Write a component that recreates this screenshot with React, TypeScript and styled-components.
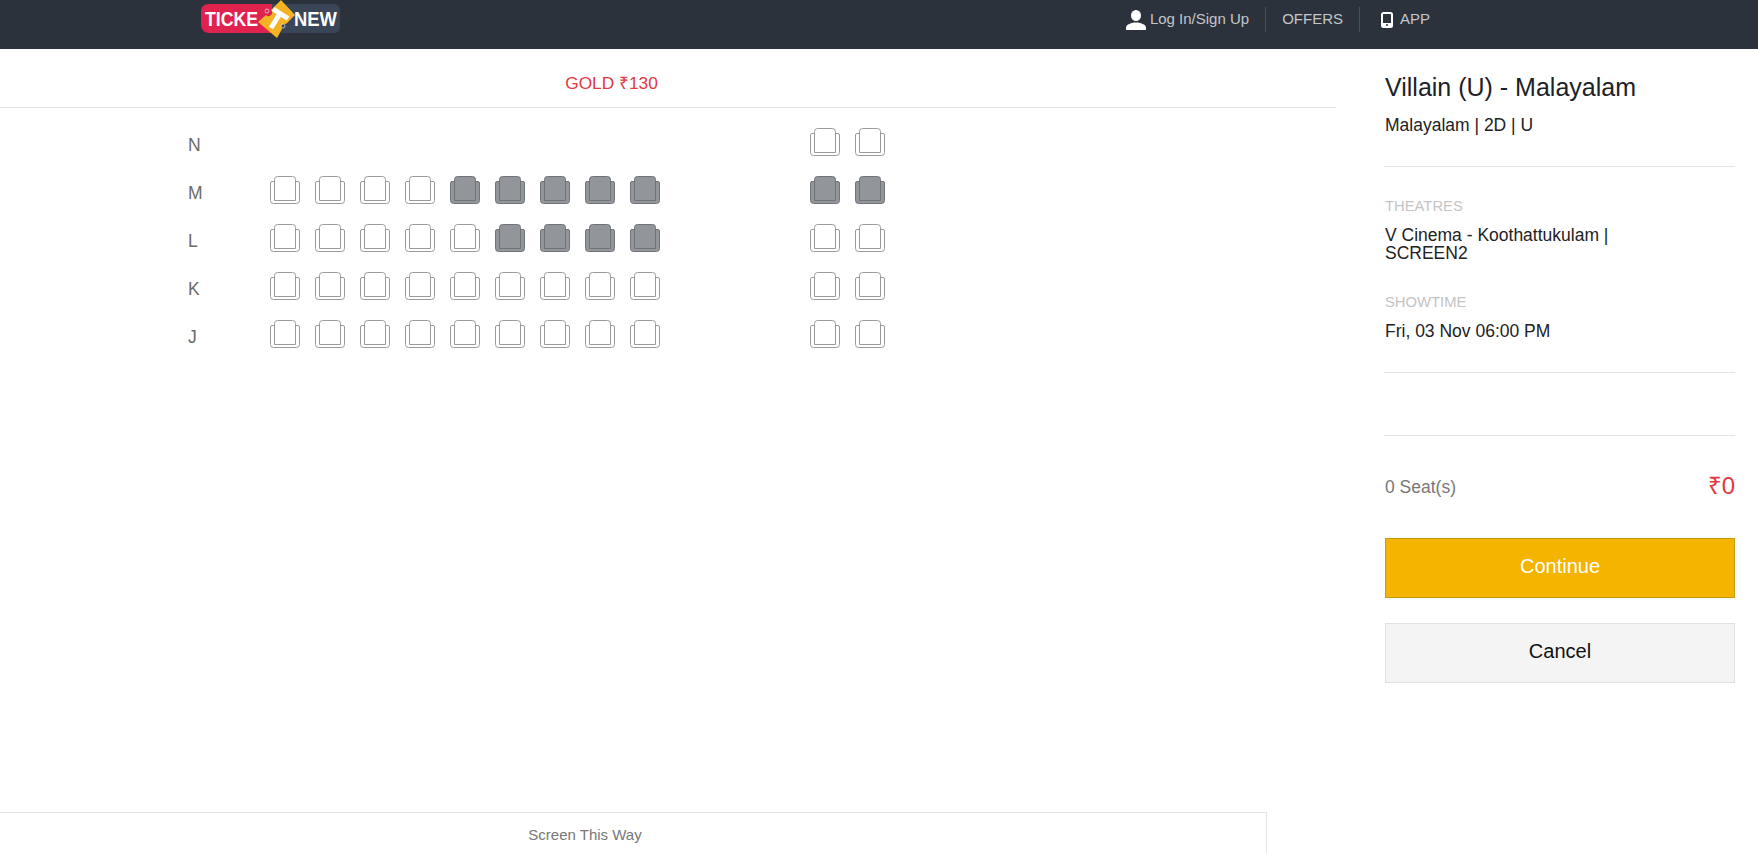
import React from "react";
import styled, { createGlobalStyle } from "styled-components";

const GlobalStyle = createGlobalStyle`
  html, body {
    margin: 0;
    padding: 0;
    height: 100%;
    background: #ffffff;
    overflow: hidden;
    font-family: "Liberation Sans", Arial, sans-serif;
  }
`;

const Page = styled.div`
  display: flex;
  flex-direction: column;
  height: 100vh;
`;

const Header = styled.header`
  display: flex;
  justify-content: space-between;
  flex: 0 0 49px;
  height: 49px;
  background: #2b323c;
  padding: 0 312px 0 200px;
`;

const LogoBox = styled.svg`
  display: block;
  width: 142px;
  height: 40px;
`;

const Nav = styled.nav`
  display: flex;
  align-items: flex-start;
  padding-top: 7px;
`;

const NavItem = styled.a<{ $divided?: boolean; $gap?: number; $inset?: number }>`
  display: flex;
  align-items: center;
  gap: ${(p) => p.$gap ?? 4}px;
  height: 25px;
  padding: 0 16px 0 ${(p) => p.$inset ?? 16}px;
  font-size: 15px;
  color: #c3c6ca;
  border-left: ${(p) => (p.$divided ? "1px solid #4a515b" : "none")};
`;

const NavLabel = styled.span`
  margin-top: -2px;
`;

const Main = styled.main`
  display: flex;
  flex: 1;
  min-height: 0;
`;

const LeftColumn = styled.section`
  display: flex;
  flex-direction: column;
  flex: 0 0 1336px;
`;

const ClassBar = styled.div`
  height: 58px;
  line-height: 68px;
  padding-right: 113px;
  text-align: center;
  font-size: 17.3px;
  color: #e2383f;
  border-bottom: 1px solid #e3e3e3;
`;

const SeatMap = styled.div`
  flex: 1;
  padding: 20px 0 0 188px;
`;

const SeatRow = styled.div`
  display: flex;
  height: 48px;
`;

const RowLabel = styled.div`
  width: 82px;
  line-height: 34px;
  font-size: 17.5px;
  color: #6b6b6b;
`;

const SeatSlot = styled.div`
  width: 45px;
  height: 28px;
`;

const SeatIcon = styled.svg`
  display: block;
  width: 30px;
  height: 28px;
`;

const ScreenBar = styled.div`
  width: 1170px;
  height: 40px;
  padding-right: 96px;
  line-height: 43px;
  text-align: center;
  font-size: 15px;
  color: #777777;
  border-top: 1px solid #e3e3e3;
  border-right: 1px solid #e3e3e3;
`;

const SidePanel = styled.aside`
  width: 350px;
  margin-left: 49px;
  padding-top: 24px;
`;

const MovieTitle = styled.h1`
  margin: 0;
  font-size: 25px;
  font-weight: 400;
  line-height: 28px;
  color: #1d2128;
`;

const InfoText = styled.p<{ $gap: number }>`
  margin: ${(p) => p.$gap}px 0 0;
  max-width: 260px;
  font-size: 17.5px;
  line-height: 18px;
  color: #222222;
`;

const Caption = styled.div<{ $gap: number }>`
  margin-top: ${(p) => p.$gap}px;
  font-size: 14.8px;
  line-height: 18px;
  color: #c4c4c4;
`;

const Divider = styled.hr<{ $gap: number }>`
  margin: ${(p) => p.$gap}px 0 0 -1px;
  border: none;
  border-top: 1px solid #e3e3e3;
`;

const TotalRow = styled.div`
  display: flex;
  justify-content: space-between;
  align-items: center;
  height: 28px;
  margin-top: 37px;
`;

const SeatCount = styled.span`
  font-size: 17.5px;
  color: #777777;
`;

const Amount = styled.span`
  margin-top: -6px;
  font-size: 24px;
  color: #e2383f;
`;

const ActionButton = styled.button<{ $primary?: boolean }>`
  display: block;
  width: 350px;
  height: 60px;
  margin: ${(p) => (p.$primary ? "37px" : "25px")} 0 0;
  padding: 0 0 3px;
  font-family: inherit;
  font-size: 20px;
  color: ${(p) => (p.$primary ? "#ffffff" : "#111111")};
  background: ${(p) => (p.$primary ? "#f5b400" : "#f4f4f4")};
  border: 1px solid ${(p) => (p.$primary ? "#c99b12" : "#e2e2e2")};
`;

const Logo = () => (
  <LogoBox viewBox="0 0 142 40">
    <path d="M8 4h64v29H9a8 8 0 0 1-8-8V11a7 7 0 0 1 7-7z" fill="#e0234e" />
    <path d="M72 4h62a6 6 0 0 1 6 6v17a6 6 0 0 1-6 6H72z" fill="#3a4558" />
    <path
      d="M81 0l14 15-9 9a3.500 3.500 0 0 0-4 5l-5 9-19-16 8-7a3.500 3.500 0 0 0 5-5z"
      fill="#f5b324"
    />
    <path d="M73 9l15 9.500M80 13.500L71 28" stroke="#ffffff" strokeWidth="5" fill="none" />
    <circle cx="67" cy="11" r="2" fill="#e0234e" stroke="#ffffff" strokeWidth="0.6" />
    <circle cx="83" cy="26" r="2" fill="#3a4558" stroke="#ffffff" strokeWidth="0.6" />
    <text
      x="5"
      y="26"
      fontSize="20"
      fontWeight="700"
      fontFamily="Liberation Sans, sans-serif"
      fill="#ffffff"
      textLength="53"
      lengthAdjust="spacingAndGlyphs"
    >
      TICKE
    </text>
    <text
      x="94"
      y="26"
      fontSize="20"
      fontWeight="700"
      fontFamily="Liberation Sans, sans-serif"
      fill="#ffffff"
      textLength="43"
      lengthAdjust="spacingAndGlyphs"
    >
      NEW
    </text>
  </LogoBox>
);

const UserIcon = () => (
  <svg width="20" height="20" viewBox="0 0 20 20" fill="#ffffff">
    <ellipse cx="10" cy="5.500" rx="5" ry="5.500" />
    <path d="M0 20v-2.500c0-3 5.500-5 10-5s10 2 10 5v2.500z" />
  </svg>
);

const TabletIcon = () => (
  <svg width="12" height="16" viewBox="0 0 12 16">
    <rect x="1" y="1" width="10" height="14" rx="1.500" fill="none" stroke="#ffffff" strokeWidth="2" />
    <rect x="1" y="11" width="10" height="4" fill="#ffffff" />
    <circle cx="6" cy="13" r="1" fill="#2b323c" />
  </svg>
);

const Seat = ({ sold }: { sold: boolean }) => {
  const fill = sold ? "#92959a" : "#ffffff";
  const stroke = sold ? "#707378" : "#9a9a9a";
  return (
    <SeatIcon viewBox="0 0 30 28">
      <path
        d="M4.500 5.500H2a1.500 1.500 0 0 0-1.500 1.500v17.500a3 3 0 0 0 3 3h23a3 3 0 0 0 3-3V7a1.500 1.500 0 0 0-1.500-1.500h-2.500"
        fill={fill}
        stroke={stroke}
      />
      <path
        d="M4.500 24.500V3.500a3 3 0 0 1 3-3h15a3 3 0 0 1 3 3v21z"
        fill={fill}
        stroke={stroke}
      />
    </SeatIcon>
  );
};

// 0 = no seat, 1 = free, 2 = sold
const rows: { label: string; seats: number[] }[] = [
  { label: "N", seats: [0, 0, 0, 0, 0, 0, 0, 0, 0, 0, 0, 0, 1, 1] },
  { label: "M", seats: [1, 1, 1, 1, 2, 2, 2, 2, 2, 0, 0, 0, 2, 2] },
  { label: "L", seats: [1, 1, 1, 1, 1, 2, 2, 2, 2, 0, 0, 0, 1, 1] },
  { label: "K", seats: [1, 1, 1, 1, 1, 1, 1, 1, 1, 0, 0, 0, 1, 1] },
  { label: "J", seats: [1, 1, 1, 1, 1, 1, 1, 1, 1, 0, 0, 0, 1, 1] },
];

const App = () => {
  return (
    <Page>
      <GlobalStyle />
      <Header>
        <Logo />
        <Nav>
          <NavItem>
            <UserIcon />
            <NavLabel>Log In/Sign Up</NavLabel>
          </NavItem>
          <NavItem $divided>
            <NavLabel>OFFERS</NavLabel>
          </NavItem>
          <NavItem $divided $gap={7} $inset={21}>
            <TabletIcon />
            <NavLabel>APP</NavLabel>
          </NavItem>
        </Nav>
      </Header>
      <Main>
        <LeftColumn>
          <ClassBar>GOLD ₹130</ClassBar>
          <SeatMap>
            {rows.map((row) => (
              <SeatRow key={row.label}>
                <RowLabel>{row.label}</RowLabel>
                {row.seats.map((s, i) => (
                  <SeatSlot key={i}>{s > 0 && <Seat sold={s === 2} />}</SeatSlot>
                ))}
              </SeatRow>
            ))}
          </SeatMap>
          <ScreenBar>Screen This Way</ScreenBar>
        </LeftColumn>
        <SidePanel>
          <MovieTitle>Villain (U) - Malayalam</MovieTitle>
          <InfoText $gap={15}>Malayalam | 2D | U</InfoText>
          <Divider $gap={32} />
          <Caption $gap={30}>THEATRES</Caption>
          <InfoText $gap={11}>V Cinema - Koothattukulam | SCREEN2</InfoText>
          <Caption $gap={31}>SHOWTIME</Caption>
          <InfoText $gap={11}>Fri, 03 Nov 06:00 PM</InfoText>
          <Divider $gap={32} />
          <Divider $gap={62} />
          <TotalRow>
            <SeatCount>0 Seat(s)</SeatCount>
            <Amount>₹0</Amount>
          </TotalRow>
          <ActionButton $primary>Continue</ActionButton>
          <ActionButton>Cancel</ActionButton>
        </SidePanel>
      </Main>
    </Page>
  );
};

export default App;
